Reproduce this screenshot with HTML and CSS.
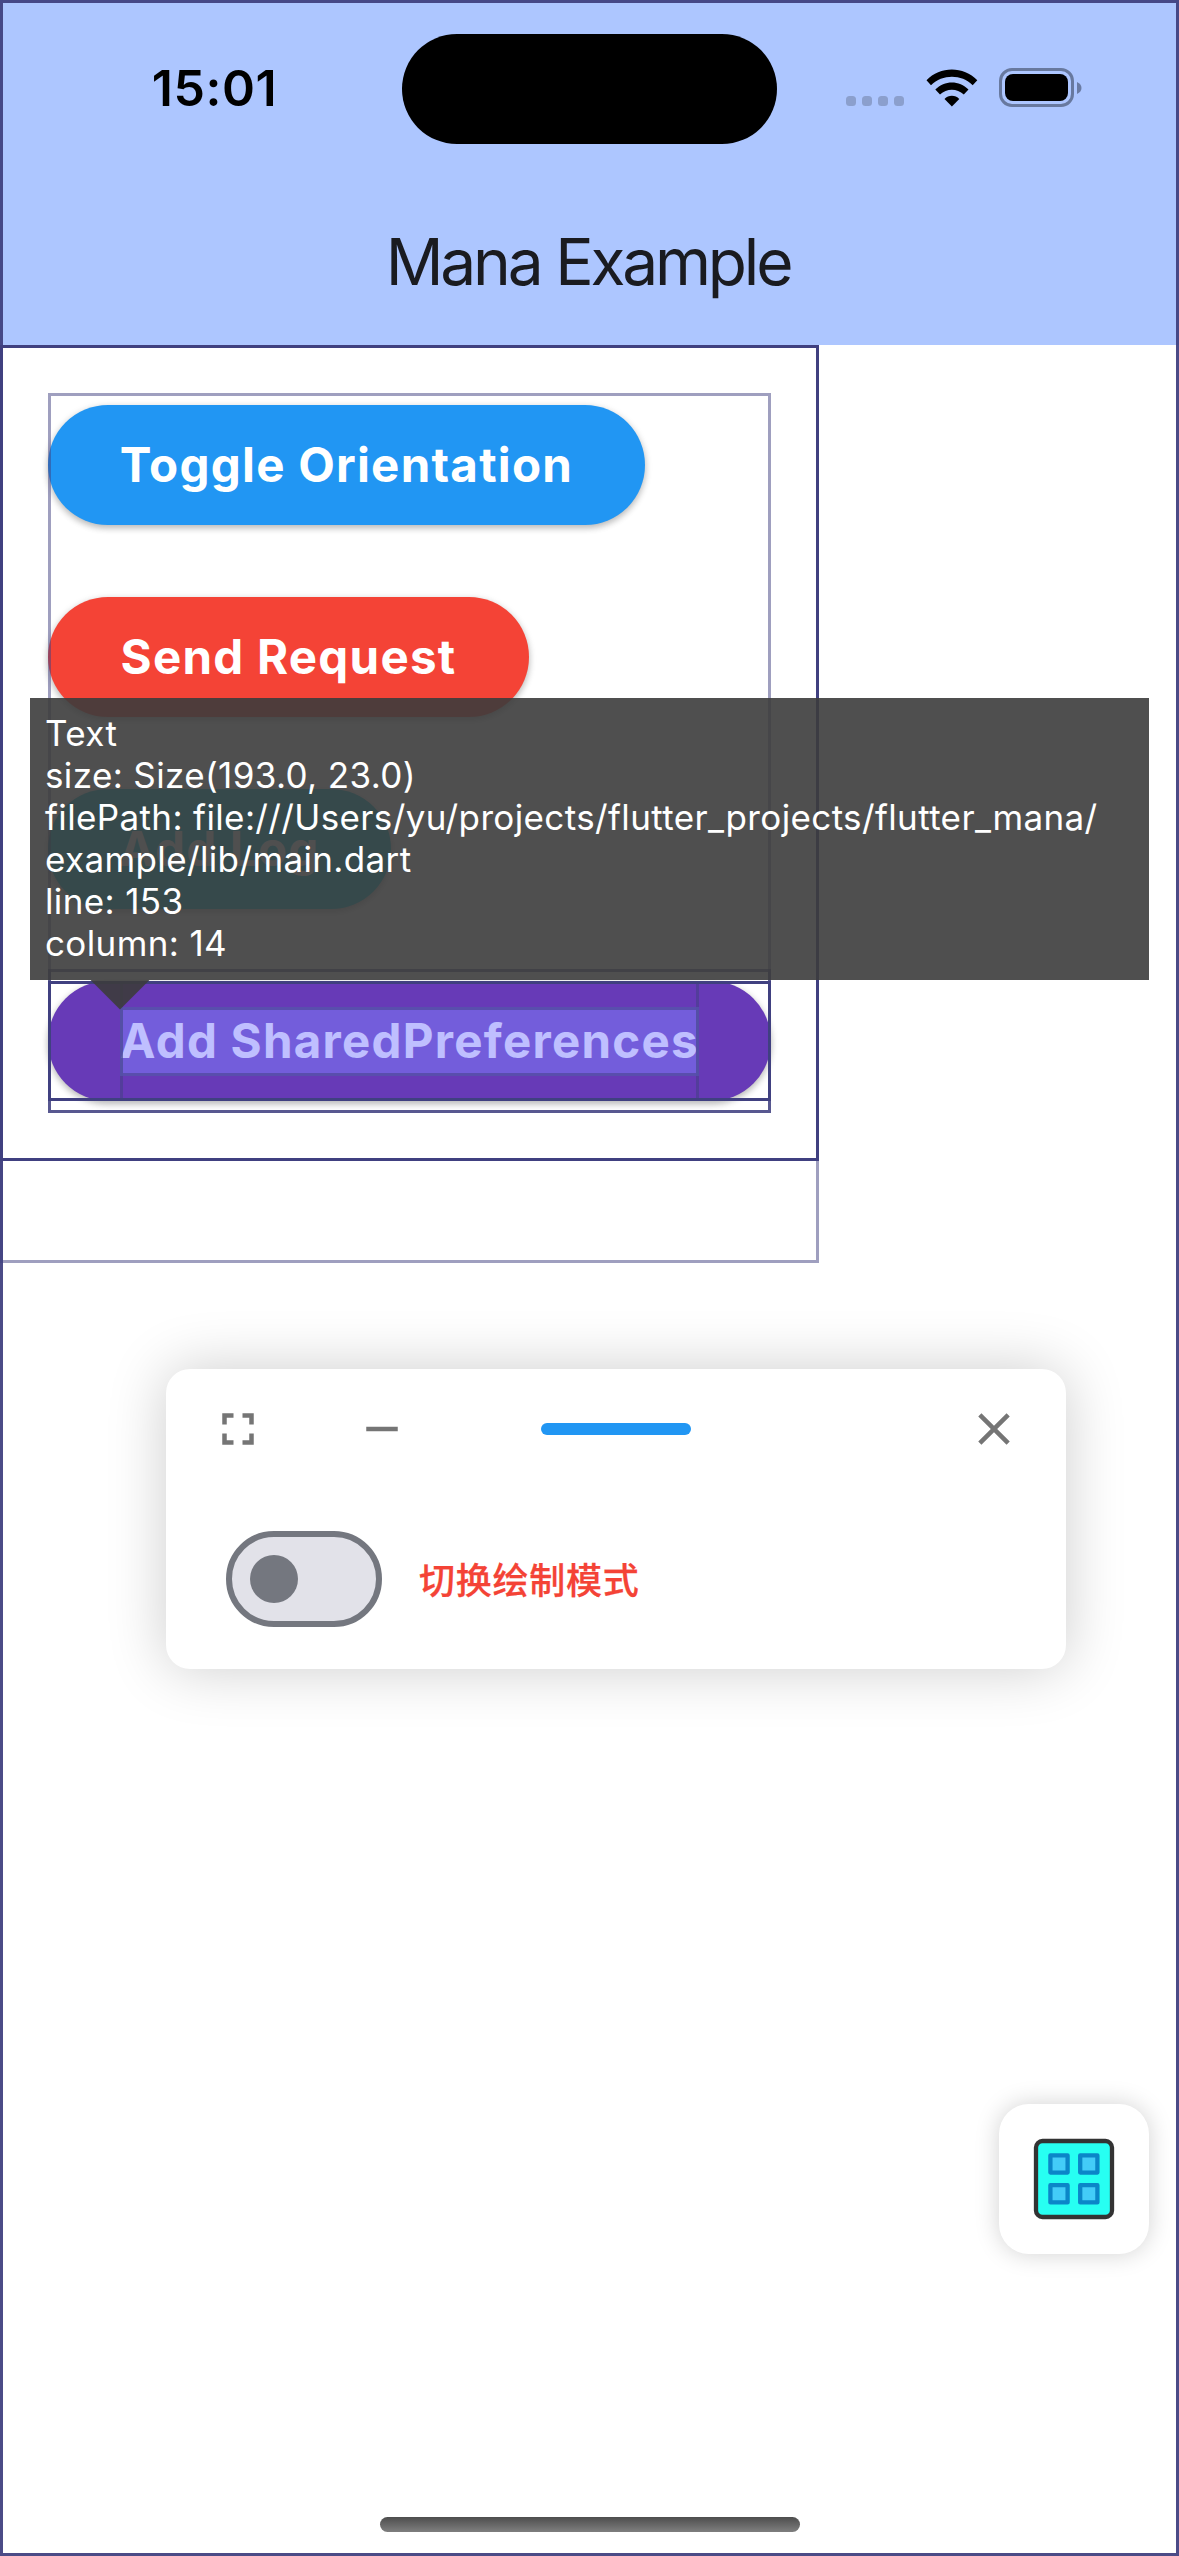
FILE: index.html
```html
<!DOCTYPE html>
<html lang="en">
<head>
<meta charset="utf-8">
<title>Mana Example</title>
<link rel="stylesheet" href="styles.css">
</head>
<body>
<div class="screen">
  <header class="app-bar">
    <div class="status-bar">
      <div class="status-time">15:01</div>
      <div class="island"></div>
      <div class="status-icons">
        <div class="signal"><i></i><i></i><i></i><i></i></div>
        <svg class="wifi" width="52" height="38" viewBox="0 0 52 38">
          <path d="M0.5 11.3C14 -3.2 37.600 -3.200 51.300 11.300L46.700 16.300C35.500 5 16.500 5 5 16.300Z"/>
          <path d="M9.300 20.500C18.500 11 33.300 11 42.500 20.500L37.800 25.500C31 19 20.700 19 14 25.500Z"/>
          <path d="M18.500 30C22.500 25.800 29.300 25.800 33.300 30L25.900 37.600Z"/>
        </svg>
        <div class="battery">
          <div class="battery-case"><div class="battery-level"></div></div>
          <svg width="5" height="12" viewBox="0 0 5 12"><path d="M0 0C6 2.500 6 9.500 0 12Z"/></svg>
        </div>
      </div>
    </div>
    <h1 class="title">Mana Example</h1>
  </header>

  <main class="actions">
    <button class="btn btn-blue">Toggle Orientation</button>
    <button class="btn btn-red">Send Request</button>
    <button class="btn btn-cyan">Add Log</button>
    <button class="btn btn-purple">Add SharedPreferences</button>
  </main>

  <div class="outline outline-screen"></div>
  <div class="outline outline-body"></div>
  <div class="outline outline-padding"></div>
  <div class="outline outline-column"></div>
  <div class="outline outline-target"></div>
  <div class="outline outline-button"></div>
  <div class="outline outline-label"></div>
  <div class="selection"></div>

  <div class="tooltip">
    <p>Text</p>
    <p>size: Size(193.0, 23.0)</p>
    <p>filePath: file:///Users/yu/projects/flutter_projects/flutter_mana/</p>
    <p>example/lib/main.dart</p>
    <p>line: 153</p>
    <p>column: 14</p>
  </div>
  <div class="tooltip-arrow"></div>

  <section class="panel">
    <div class="panel-bar">
      <svg class="icon" viewBox="0 0 24 24"><path d="M7 14H5v5h5v-2H7v-3zm-2-4h2V7h3V5H5v5zm12 7h-3v2h5v-5h-2v3zM14 5v2h3v3h2V5h-5z"/></svg>
      <svg class="icon" viewBox="0 0 24 24"><path d="M5 11h14v2H5z"/></svg>
      <div class="handle"></div>
      <svg class="icon" viewBox="0 0 24 24"><path d="M19 6.410L17.590 5 12 10.590 6.410 5 5 6.410 10.590 12 5 17.590 6.410 19 12 13.410 17.590 19 19 17.590 13.410 12z"/></svg>
    </div>
    <label class="panel-row">
      <span class="switch"><span class="thumb"></span></span>
      <span class="switch-label" lang="zh-CN">切换绘制模式</span>
    </label>
  </section>

  <div class="fab">
    <svg width="82" height="82" viewBox="0 0 82 82">
      <rect x="3" y="3" width="76" height="76" rx="6.500" fill="#27fff2" stroke="#333" stroke-width="4.300"/>
      <g fill="#43ccf8" stroke="#0b86c8" stroke-width="4.300" stroke-linejoin="round">
        <rect x="17.400" y="17.400" width="17.200" height="17.200"/>
        <rect x="47.200" y="17.400" width="17.200" height="17.200"/>
        <rect x="17.400" y="47.200" width="17.200" height="17.200"/>
        <rect x="47.200" y="47.200" width="17.200" height="17.200"/>
      </g>
    </svg>
  </div>
  <div class="home-indicator"></div>
</div>
</body>
</html>
```
FILE: styles.css
```css
* {
  box-sizing: border-box;
}

body {
  margin: 0;
  background: #fff;
  font-family: Inter, "Noto Sans CJK SC", sans-serif;
}

h1,
p {
  margin: 0;
}

.screen {
  position: relative;
  width: 1179px;
  height: 2556px;
  overflow: hidden;
  background: #fff;
}

/* App bar */

.app-bar {
  height: 345px;
  background: #adc6ff;
}

.status-bar {
  display: grid;
  grid-template-columns: 402px 375px 1fr;
  height: 177px;
}

.status-time {
  padding-left: 27px;
  padding-top: 58px;
  text-align: center;
  font-size: 50px;
  line-height: 60px;
  font-weight: 600;
  letter-spacing: 0.6px;
  color: #000;
}

.island {
  height: 110px;
  margin-top: 34px;
  border-radius: 55px;
  background: #000;
}

.status-icons {
  display: flex;
  align-items: flex-start;
  padding-top: 68px;
  padding-left: 69px;
}

.signal {
  display: flex;
  gap: 6px;
  margin-top: 28px;
}

.signal i {
  width: 10px;
  height: 10px;
  border-radius: 3.5px;
  background: #8b9fcd;
}

.wifi {
  margin: 1px 0 0 22px;
}

.battery {
  display: flex;
  align-items: center;
  gap: 3px;
  margin-left: 21px;
  fill: #6a7ba3;
}

.battery-case {
  width: 75px;
  height: 39px;
  padding: 3px;
  border: 3px solid #68799f;
  border-radius: 13px;
}

.battery-level {
  height: 27px;
  border-radius: 8px;
  background: #000;
}

.title {
  padding-top: 47px;
  padding-right: 3px;
  text-align: center;
  font-size: 64px;
  line-height: 76px;
  font-weight: 400;
  letter-spacing: -3.2px;
  color: #1a1b20;
}

/* Buttons */

.actions {
  display: flex;
  flex-direction: column;
  align-items: flex-start;
  gap: 72px;
  padding: 60px 48px;
}

.btn {
  height: 120px;
  padding: 0 0 1px;
  border: 0;
  border-radius: 60px;
  font-family: inherit;
  font-size: 47.5px;
  font-weight: 700;
  letter-spacing: 1.25px;
  color: #fff;
  white-space: nowrap;
  box-shadow: 0 3px 6px rgba(0, 0, 0, 0.2), 0 2px 9px rgba(0, 0, 0, 0.12);
}

.btn-blue {
  width: 597px;
  background: #2196f3;
}

.btn-red {
  width: 481px;
  background: #f44336;
}

.btn-cyan {
  width: 343px;
  background: #00bcd4;
}

.btn-purple {
  width: 723px;
  background: #673ab7;
}

/* Inspector outlines drawn over the app */

.outline {
  position: absolute;
  border: 3px solid rgba(64, 64, 128, 0.5);
}

.outline-screen {
  inset: 0;
  border-color: rgba(64, 64, 128, 0.94);
}

.outline-body {
  left: 0;
  top: 345px;
  width: 819px;
  height: 918px;
}

.outline-padding {
  left: 0;
  top: 345px;
  width: 819px;
  height: 816px;
  border-color: #404080;
}

.outline-column {
  left: 48px;
  top: 393px;
  width: 723px;
  height: 720px;
}

.outline-target {
  left: 48px;
  top: 969px;
  width: 723px;
  height: 144px;
  border-color: rgba(64, 64, 128, 0.75);
}

.outline-button {
  left: 48px;
  top: 981px;
  width: 723px;
  height: 120px;
  border-color: #404080;
}

.outline-label {
  left: 120px;
  top: 981px;
  width: 579px;
  height: 120px;
  border-top: 0;
  border-bottom: 0;
}

.selection {
  position: absolute;
  left: 120px;
  top: 1006.5px;
  width: 579px;
  height: 69px;
  border: 3px solid rgba(64, 64, 128, 0.5);
  background: rgba(128, 128, 255, 0.5);
}

.tooltip {
  position: absolute;
  left: 30px;
  top: 697.5px;
  width: 1119px;
  height: 282px;
  padding: 14.5px 15px;
  background: rgba(60, 60, 60, 0.9);
  color: #fff;
  font-size: 35px;
  line-height: 42px;
  letter-spacing: 0.37px;
  white-space: nowrap;
}

.tooltip-arrow {
  position: absolute;
  left: 90px;
  top: 979.5px;
  width: 60px;
  height: 30px;
  background: rgba(60, 60, 60, 0.9);
  clip-path: polygon(0 0, 100% 0, 50% 100%);
}

/* Floating tool panel */

.panel {
  position: absolute;
  left: 166px;
  top: 1369px;
  width: 900px;
  height: 300px;
  border-radius: 24px;
  background: #fff;
  box-shadow: 0 0 60px rgba(0, 0, 0, 0.2);
}

.panel-bar {
  display: grid;
  grid-template-columns: 144px 144px 1fr 144px;
  place-items: center;
  height: 120px;
}

.panel-bar .handle {
  margin-right: 144px;
}

.icon {
  width: 54px;
  height: 54px;
  fill: #757575;
}

.handle {
  width: 150px;
  height: 12px;
  border-radius: 6px;
  background: #2196f3;
}

.panel-row {
  display: flex;
  align-items: center;
  gap: 36px;
  height: 180px;
  padding: 0 60px;
}

.switch {
  display: flex;
  align-items: center;
  width: 156px;
  height: 96px;
  padding-left: 18px;
  border: 6px solid #74777f;
  border-radius: 48px;
  background: #e2e2e9;
}

.thumb {
  width: 48px;
  height: 48px;
  border-radius: 50%;
  background: #74777f;
}

.switch-label {
  padding: 0 0 3px 1px;
  font-family: "Noto Sans CJK SC", sans-serif;
  font-size: 36px;
  font-weight: 500;
  letter-spacing: 0.75px;
  color: #f44336;
  -webkit-text-stroke: 0.25px #f44336;
}

.fab {
  position: absolute;
  left: 999px;
  top: 2104px;
  width: 150px;
  height: 150px;
  display: grid;
  place-items: center;
  border-radius: 30px;
  background: #fff;
  box-shadow: 0 0 24px rgba(0, 0, 0, 0.18);
}

.home-indicator {
  position: absolute;
  left: 380px;
  top: 2517px;
  width: 420px;
  height: 15px;
  border-radius: 7.5px;
  background: linear-gradient(#4d4d4d, #7f7f7f);
}
```
